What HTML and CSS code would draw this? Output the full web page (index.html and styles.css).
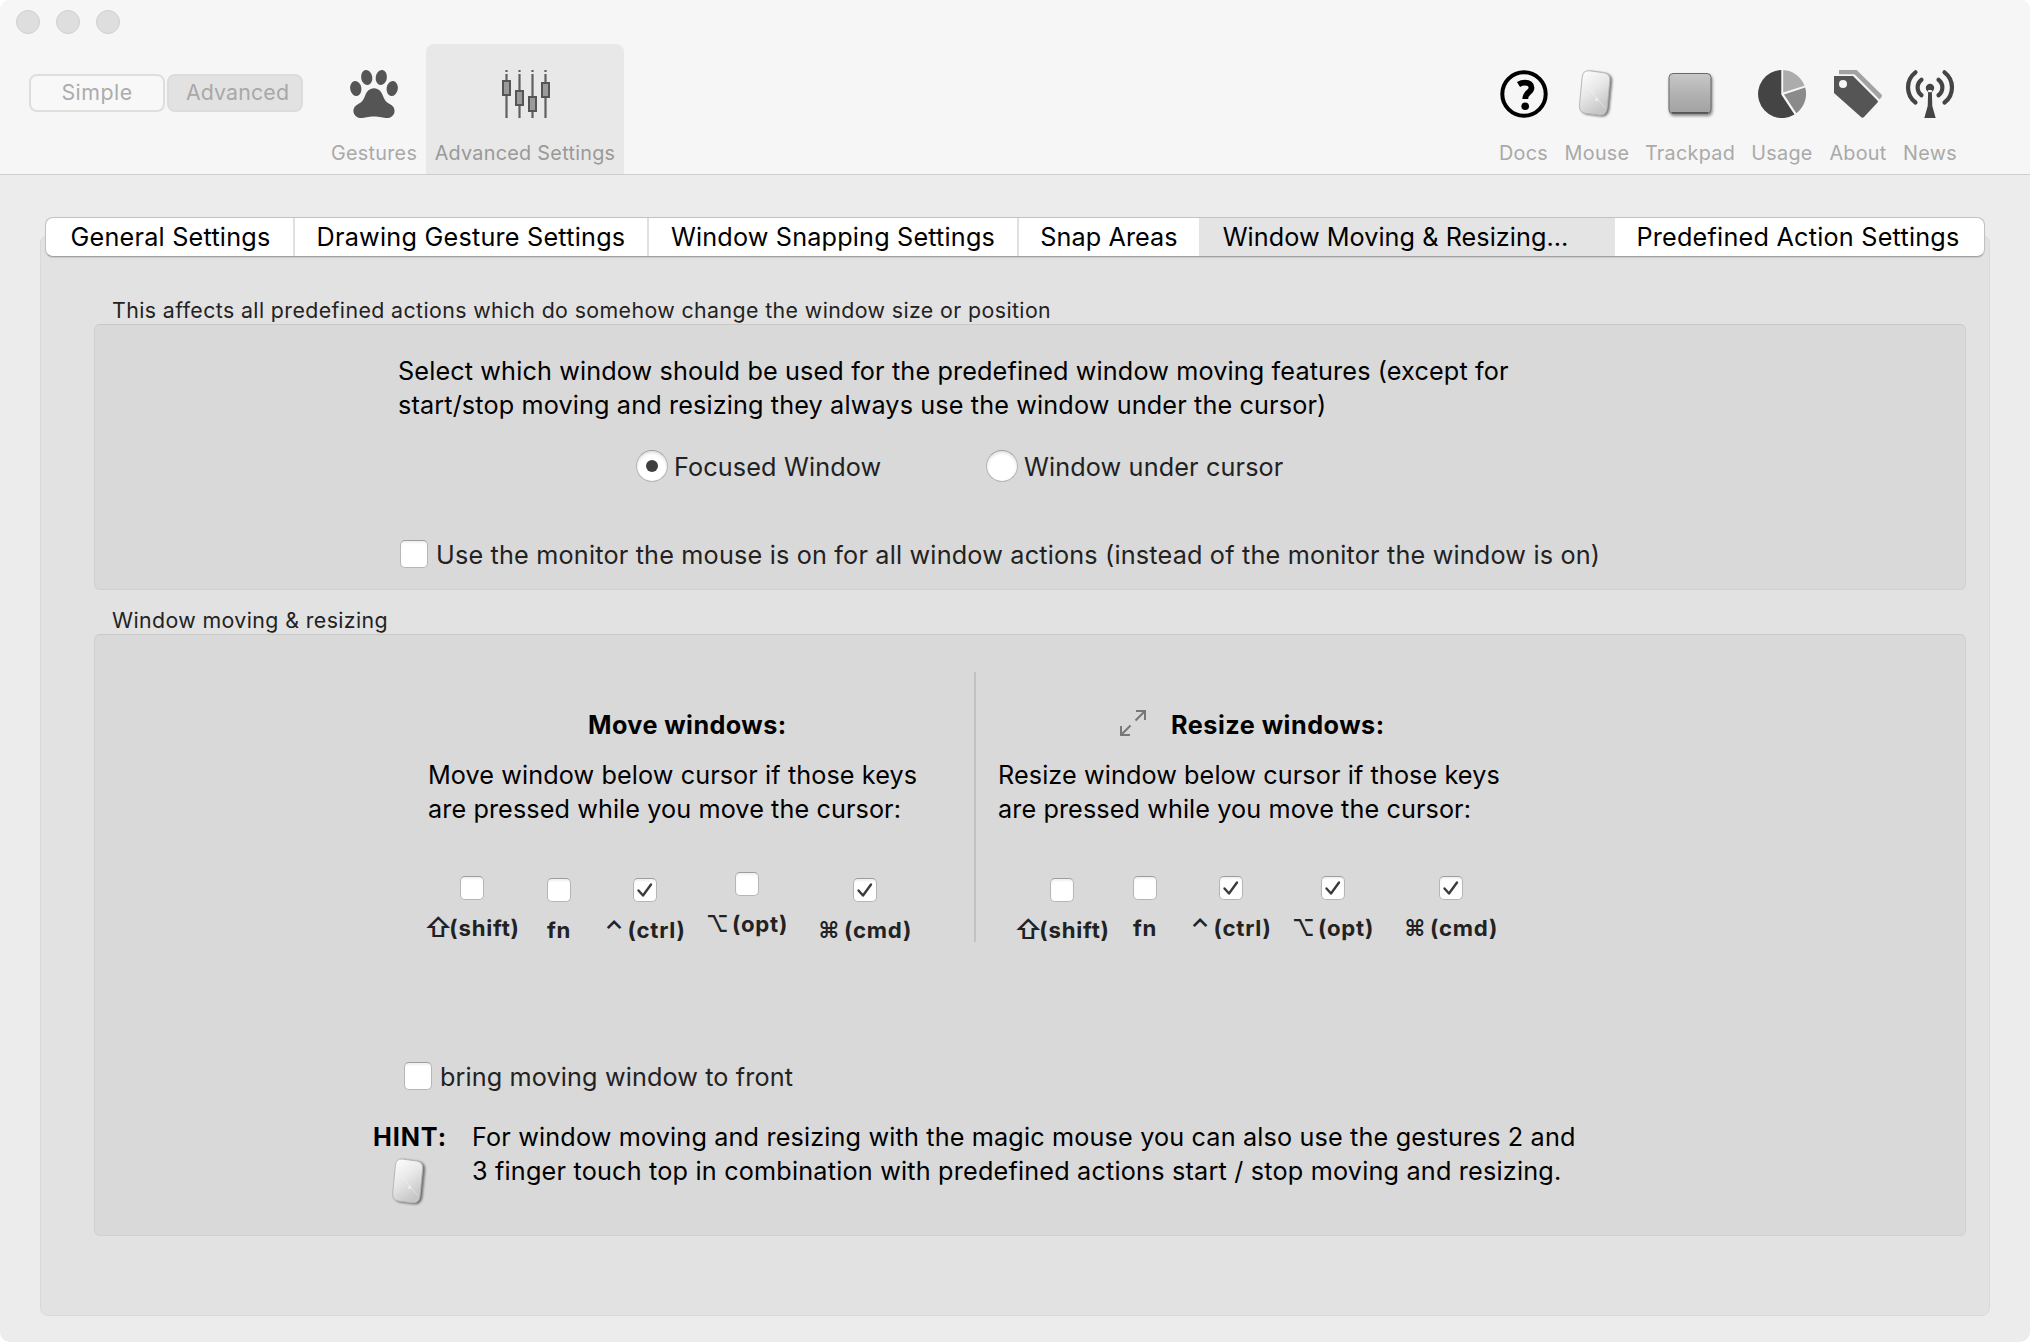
FILE: index.html
```
<!DOCTYPE html>
<html lang="en">
<head>
<meta charset="utf-8">
<title>Advanced Settings</title>
<link rel="stylesheet" href="styles.css">
</head>
<body>
<svg width="0" height="0" class="defs">
  <defs>
    <linearGradient id="mouseFill" x1="0" y1="0" x2="0.5" y2="1"><stop offset="0" stop-color="#ffffff"/><stop offset="0.5" stop-color="#e9e9e9"/><stop offset="1" stop-color="#c6c6c6"/></linearGradient>
    <linearGradient id="padFill" x1="0" y1="0" x2="0" y2="1"><stop offset="0" stop-color="#c8c8c8"/><stop offset="0.6" stop-color="#aeaeae"/><stop offset="1" stop-color="#a2a2a2"/></linearGradient>
    <symbol id="mouse" viewBox="0 0 38 50">
      <path d="M11 0.8 L26 2.8 Q33 4 32.4 11 L29.5 40 Q28.5 47.8 21 47 L6.500 45 Q0 43.800 0.7 37 L3.500 8 Q4.300 0 11 0.800Z" fill="url(#mouseFill)" stroke="#b4b4b4" stroke-width="1"/>
      <path d="M9 18 L28 40" stroke="#fff" stroke-width="0.8" opacity="0.5"/>
      <circle cx="18.500" cy="31" r="1.500" fill="#fff" opacity="0.600"/>
    </symbol>
    <symbol id="check" viewBox="0 0 24 24"><path d="M5.500 12.500 L10 17.500 L18 6.500" fill="none" stroke="#3b3b3b" stroke-width="2.400" stroke-linecap="round" stroke-linejoin="round"/></symbol>
  </defs>
</svg>
<div class="window">
  <header class="toolbar">
    <div class="lights"><i class="light"></i><i class="light"></i><i class="light"></i></div>
    <div class="items">
      <div class="modes">
        <button class="mode">Simple</button>
        <button class="mode mode-on">Advanced</button>
      </div>
      <div class="item w-gestures">
        <svg class="icon" width="48" height="48" viewBox="0 0 48 48" fill="#555">
          <ellipse cx="5.800" cy="18.500" rx="5.600" ry="7.600" transform="rotate(-10 5.800 18.500)"/>
          <ellipse cx="16.700" cy="7.500" rx="5.600" ry="7.600" transform="rotate(-8 16.700 7.500)"/>
          <ellipse cx="31.300" cy="7.500" rx="5.600" ry="7.600" transform="rotate(8 31.300 7.500)"/>
          <ellipse cx="42.200" cy="18.500" rx="5.600" ry="7.600" transform="rotate(10 42.200 18.500)"/>
          <path d="M24 18.300 C29 18.300 31.500 22 33 26 C35 31.500 37 32.500 40.500 34.500 C44 36.500 45 39.500 44.400 42.500 C43.500 46 40.500 48 37 48 C33 48 30 46.400 24 46.400 C18 46.400 15 48 11 48 C7.500 48 4.500 46 3.600 42.500 C3 39.500 4 36.500 7.500 34.500 C11 32.500 13 31.500 15 26 C16.500 22 19 18.300 24 18.300Z"/>
        </svg>
        <span class="label">Gestures</span>
      </div>
      <div class="item w-advanced item-on">
        <svg class="icon sliders" width="48" height="48" viewBox="0 0 48 48">
          <path d="M4.500 0V2M17.500 0V2M30.500 0V2M43.500 0V2M4.500 4V48M17.500 4V48M30.500 4V48M43.500 4V48" stroke="#606060" stroke-width="2.200"/>
          <g fill="#9b9b9b" stroke="#555" stroke-width="2"><rect x="1" y="11" width="7" height="14"/><rect x="14" y="21" width="7" height="14"/><rect x="27" y="27" width="7" height="14"/><rect x="40" y="13" width="7" height="14"/></g>
        </svg>
        <span class="label">Advanced Settings</span>
      </div>
      <div class="spacer"></div>
      <div class="item w-docs">
        <svg class="icon" width="48" height="48" viewBox="0 0 48 48" fill="none" stroke="#000">
          <circle cx="24" cy="24" r="21.700" stroke-width="4"/>
          <path d="M18.500 14.500 Q21.500 12.600 25 12.600 C29.200 12.600 31.500 14.800 31.500 17.700 C31.500 22.800 25.300 22 25.300 29" stroke-width="5.800"/>
          <circle cx="25.200" cy="36.300" r="3.800" fill="#000" stroke="none"/>
        </svg>
        <span class="label">Docs</span>
      </div>
      <div class="item w-mouse">
        <svg class="icon mouse" width="38" height="50"><use href="#mouse"/></svg>
        <span class="label">Mouse</span>
      </div>
      <div class="item w-trackpad">
        <svg class="icon pad" width="48" height="48" viewBox="0 0 48 48"><rect x="3" y="3.500" width="42" height="40" rx="4" fill="url(#padFill)" stroke="#6a6a6a"/><path d="M6 42.800H42" stroke="#555" stroke-width="1.500"/></svg>
        <span class="label">Trackpad</span>
      </div>
      <div class="item w-usage">
        <svg class="icon" width="48" height="48" viewBox="0 0 48 48">
          <path d="M23.300 0 A24 24 0 1 0 36.500 44.500 L23.300 24.500Z" fill="#444"/>
          <path d="M25.200 0 A24 24 0 0 1 46.500 15.700 L25.200 22.500Z" fill="#acacac"/>
          <path d="M47.200 17.600 A24 24 0 0 1 38.300 43.200 L26 24.400Z" fill="#8a8a8a"/>
        </svg>
        <span class="label">Usage</span>
      </div>
      <div class="item w-about">
        <svg class="icon" width="48" height="48" viewBox="0 0 48 48">
          <path d="M5 0H22.700L47.500 24.500Q48.500 25.500 47.500 27L45.500 29.500L20.500 4.200H5Z" fill="#a3a3a3"/>
          <path fill-rule="evenodd" d="M0 6H19L43.500 30.500Q44.500 31.500 43.500 32.500L30 47Q28.500 48.500 27 47L0 23ZM9 10A4 4 0 1 0 9 18A4 4 0 1 0 9 10Z" fill="#555"/>
        </svg>
        <span class="label">About</span>
      </div>
      <div class="item w-news">
        <svg class="icon" width="48" height="48" viewBox="0 0 48 48" fill="none" stroke="#444" stroke-width="4.200" stroke-linecap="round">
          <path d="M9.500 2.300A19 19 0 0 0 9.500 32.500M38.500 2.300A19 19 0 0 1 38.500 32.500M15.500 9.800A9.600 9.600 0 0 0 15.500 25.200M32.500 9.800A9.600 9.600 0 0 1 32.500 25.200"/>
          <path d="M22.200 20H25.800L26.300 36L29.700 48H18.300L21.700 36ZM24 13.800A4.200 4.200 0 1 0 24 22.200A4.200 4.200 0 1 0 24 13.800Z" fill="#444" stroke="none"/>
        </svg>
        <span class="label">News</span>
      </div>
    </div>
  </header>

  <main class="content">
    <section class="panel">
      <nav class="tabs">
        <div class="tab t1">General Settings</div>
        <div class="tab t2">Drawing Gesture Settings</div>
        <div class="tab t3">Window Snapping Settings</div>
        <div class="tab t4">Snap Areas</div>
        <div class="tab t5 tab-on">Window Moving &amp; Resizing…</div>
        <div class="tab t6">Predefined Action Settings</div>
      </nav>

      <h2 class="caption">This affects all predefined actions which do somehow change the window size or position</h2>
      <div class="box box-target">
        <p class="intro">Select which window should be used for the predefined window moving features (except for<br>start/stop moving and resizing they always use the window under the cursor)</p>
        <div class="radios">
          <label class="choice radio-first"><i class="radio radio-on"></i>Focused Window</label>
          <label class="choice"><i class="radio"></i>Window under cursor</label>
        </div>
        <label class="option option-monitor"><i class="checkbox"></i><span>Use the monitor the mouse is on for all window actions (instead of the monitor the window is on)</span></label>
      </div>

      <h2 class="caption caption-moving">Window moving &amp; resizing</h2>
      <div class="box box-moving">
        <div class="columns">
          <div class="column column-move">
            <h3 class="title">Move windows:</h3>
            <p class="text">Move window below cursor if those keys<br>are pressed while you move the cursor:</p>
            <div class="keys keys-move">
              <div class="key"><i class="small"></i><span class="name"><b class="sym shift">⇧</b>(shift)</span></div>
              <div class="key"><i class="small"></i><span class="name">fn</span></div>
              <div class="key"><i class="small"><svg width="24" height="24"><use href="#check"/></svg></i><span class="name"><b class="sym ctrl">⌃</b>(ctrl)</span></div>
              <div class="key"><i class="small"></i><span class="name"><b class="sym opt">⌥</b>(opt)</span></div>
              <div class="key"><i class="small"><svg width="24" height="24"><use href="#check"/></svg></i><span class="name"><b class="sym cmd">⌘</b>(cmd)</span></div>
            </div>
          </div>
          <div class="column column-resize">
            <h3 class="title"><svg width="26" height="26" viewBox="0 0 26 26" fill="none" stroke="#777" stroke-width="2"><path d="M16 1H25V10M25 1L15.500 10.500M1 16V25H10M1 25L10.500 15.500"/></svg>Resize windows:</h3>
            <p class="text">Resize window below cursor if those keys<br>are pressed while you move the cursor:</p>
            <div class="keys keys-resize">
              <div class="key"><i class="small"></i><span class="name"><b class="sym shift">⇧</b>(shift)</span></div>
              <div class="key"><i class="small"></i><span class="name">fn</span></div>
              <div class="key"><i class="small"><svg width="24" height="24"><use href="#check"/></svg></i><span class="name"><b class="sym ctrl">⌃</b>(ctrl)</span></div>
              <div class="key"><i class="small"><svg width="24" height="24"><use href="#check"/></svg></i><span class="name"><b class="sym opt">⌥</b>(opt)</span></div>
              <div class="key"><i class="small"><svg width="24" height="24"><use href="#check"/></svg></i><span class="name"><b class="sym cmd">⌘</b>(cmd)</span></div>
            </div>
          </div>
        </div>
        <label class="option option-front"><i class="checkbox"></i><span>bring moving window to front</span></label>
        <div class="hint">
          <div class="hint-head"><strong>HINT:</strong><svg class="mouse" width="36" height="48"><use href="#mouse"/></svg></div>
          <p>For window moving and resizing with the magic mouse you can also use the gestures 2 and<br><span class="hint-end">3 finger touch top in combination with predefined actions start / stop moving and resizing.</span></p>
        </div>
      </div>
    </section>
  </main>
</div>
</body>
</html>
```
FILE: styles.css
```
* { box-sizing: border-box; }
body {
  margin: 0;
  background: #fff;
  font-family: Inter, "Liberation Sans", sans-serif;
  font-size: 25.22px;
  line-height: 34px;
  letter-spacing: 0.13px;
  color: #000;
}
h2, h3, p { margin: 0; }
.defs { position: absolute; }
.window {
  width: 2030px;
  height: 1342px;
  border-radius: 10px;
  overflow: hidden;
  background: #ececec;
  display: flex;
  flex-direction: column;
}

/* toolbar */
.toolbar {
  height: 175px;
  background: #f6f6f6;
  border-bottom: 1px solid #cdcdcd;
  display: flex;
  flex-direction: column;
  flex: none;
}
.lights { height: 44px; padding: 10px 0 0 16px; display: flex; gap: 16px; }
.light { width: 24px; height: 24px; border-radius: 50%; background: #dedede; border: 1px solid #cfcfcf; }
.items { height: 130px; display: flex; padding: 0 64px 0 29px; }
.modes { display: flex; gap: 2px; padding-top: 30px; width: 293px; }
.mode {
  width: 136px;
  height: 38px;
  padding: 0 0 2px;
  border: 2px solid #dedede;
  border-radius: 8px;
  background: #f8f8f8;
  font: 21.34px/30px Inter, sans-serif;
  letter-spacing: 0.5px;
  color: #acacac;
}
.mode-on { background: #e2e2e2; border-color: #dcdcdc; color: #a8a8a8; letter-spacing: 0.15px; padding-left: 5px; }
.item { display: flex; flex-direction: column; align-items: center; padding-top: 26px; flex: none; }
.item-on { background: #e8e8e8; border-radius: 8px 8px 0 0; }
.icon { height: 48px; overflow: visible; flex: none; }
.label { margin-top: 22px; font-size: 19.8px; line-height: 26px; letter-spacing: 0.28px; color: #a9a9a9; white-space: nowrap; }
.item-on .label { color: #999; }
.sliders { margin-left: 2px; }
.spacer { flex: 1; }
.w-gestures { width: 104px; }
.w-advanced { width: 198px; }
.w-docs { width: 65px; }
.w-mouse { width: 82px; }
.w-trackpad { width: 104px; }
.w-usage { width: 80px; }
.w-about { width: 72px; }
.w-news { width: 72px; }
.mouse { filter: drop-shadow(2px 1px 1px rgba(0, 0, 0, 0.5)); }
.pad { filter: drop-shadow(1px 2px 1.5px rgba(0, 0, 0, 0.45)); }

/* tabbed panel */
.content { padding: 60px 40px 26px; flex: 1; display: flex; }
.panel { flex: 1; min-width: 0; background: #e2e2e2; border: 1px solid #d9d9d9; border-radius: 8px; padding: 0 23px 0 53px; }
.tabs {
  width: 1940px;
  height: 40px;
  margin: -19px 0 0 -49px;
  display: flex;
  background: #fff;
  border: 1px solid #c2c2c2;
  border-bottom-color: #a2a2a2;
  border-radius: 8px;
  box-shadow: 0 1px 1px rgba(0, 0, 0, 0.12);
  overflow: hidden;
}
.tab { line-height: 38px; text-align: center; border-right: 2px solid #e0e0e0; white-space: nowrap; letter-spacing: 0.22px; flex: none; }
.t1 { width: 249px; padding-left: 2px; }
.t2 { width: 354px; }
.t3 { width: 370px; letter-spacing: 0.17px; }
.t4 { width: 180px; border-right: 0; letter-spacing: 0.07px; }
.t5 { width: 416px; border-right: 0; padding-right: 23px; letter-spacing: 0.05px; }
.t6 { width: 368px; border-right: 0; padding-right: 2px; }
.tab-on { background: #e4e4e4; }
.caption { margin: 40px 0 1px 18px; font-size: 21.34px; font-weight: 400; line-height: 26px; letter-spacing: 0.4px; color: #222; }
.caption-moving { margin-top: 17px; }
.box { width: 1872px; background: #d9d9d9; border: 1px solid #d0d0d0; border-top-color: #c8c8c8; border-radius: 6px; }

/* target window */
.box-target { height: 266px; padding-top: 29px; }
.intro { margin-left: 303px; }
.radios { display: flex; margin: 28px 0 0 541px; }
.choice { display: flex; gap: 6px; height: 32px; line-height: 34px; color: #222; }
.radio-first { width: 350px; }
.radio {
  width: 32px;
  height: 32px;
  border-radius: 50%;
  background: #fff;
  border: 1px solid #b4b4b4;
  border-top-color: #9d9d9d;
  box-shadow: inset 0 2px 3px rgba(0, 0, 0, 0.12);
  display: flex;
  align-items: center;
  justify-content: center;
}
.radio-on::after { content: ""; width: 12px; height: 12px; border-radius: 50%; background: #3f3f3f; }
.option { display: flex; gap: 8px; height: 28px; line-height: 30px; color: #222; }
.option-monitor { margin: 58px 0 0 305px; letter-spacing: 0.18px; }
.checkbox, .small {
  display: block;
  width: 28px;
  height: 28px;
  border-radius: 5px;
  background: #fff;
  border: 1px solid #b6b6b6;
  border-top-color: #9d9d9d;
  box-shadow: inset 0 2px 2px rgba(0, 0, 0, 0.06);
}

/* moving and resizing */
.box-moving { height: 602px; padding-top: 37px; }
.columns { display: flex; height: 270px; }
.column { padding-top: 36px; }
.column-move { width: 881px; border-right: 2px solid #c2c2c2; }
.title { font-size: 25.22px; font-weight: 700; letter-spacing: 0.42px; }
.column-move .title { margin-left: 493px; }
.column-resize .title { margin-left: 144px; display: flex; gap: 25px; letter-spacing: 0.5px; }
.title svg { margin-top: 2px; }
.text { margin-top: 16px; letter-spacing: 0.09px; }
.column-move .text { margin-left: 332px; }
.column-resize .text { margin-left: 21px; }
.column-move .text, .column-resize .text { padding-left: 1px; }
.keys { display: grid; }
.keys-move { margin: 46px 0 0 325px; grid-template-columns: 104px 70px 102px 102px 134px; }
.keys-resize { margin: 50px 0 0 34px; grid-template-columns: 104px 62px 110px 94px 142px; }
.key { display: flex; flex-direction: column; align-items: center; padding-top: 6px; }
.keys-move .key:nth-child(1) { padding-top: 4px; }
.keys-move .key:nth-child(4) { padding-top: 0; }
.keys-resize .key { padding-top: 0; }
.keys-resize .key:nth-child(1) { padding-top: 2px; }
.small { width: 24px; height: 24px; }
.small svg { display: block; margin: -1px; }
.name { display: flex; margin-top: 14px; font-size: 22.2px; font-weight: 700; line-height: 28px; letter-spacing: 0.75px; color: #222; white-space: nowrap; }
.sym { letter-spacing: 0; font-weight: 600; }
.shift { width: 25px; font-size: 26px; }
.ctrl { width: 23px; font-size: 24px; }
.opt, .cmd { width: 26px; }
.option-front { margin: 120px 0 0 309px; letter-spacing: 0.12px; }
.hint { display: flex; margin: 30px 0 0 278px; letter-spacing: 0.15px; }
.hint-end { letter-spacing: 0.19px; }
.hint-head { width: 99px; display: flex; flex-direction: column; }
.hint-head strong { letter-spacing: 0.9px; }
.hint-head svg { margin: 4px 0 0 19px; overflow: visible; }
```
